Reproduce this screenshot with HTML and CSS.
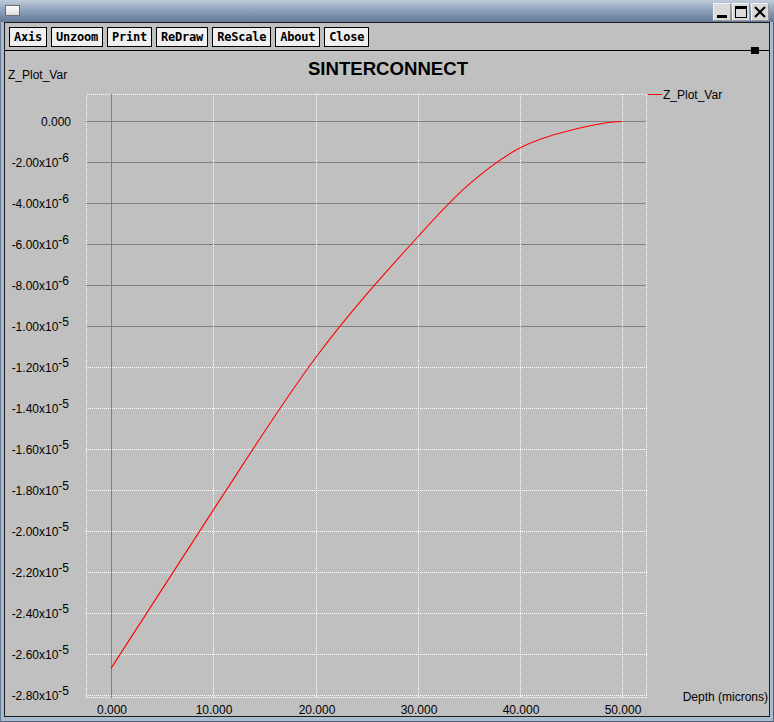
FILE: index.html
```html
<!DOCTYPE html>
<html>
<head>
<meta charset="utf-8">
<link rel="stylesheet" href="styles.css">
</head>
<body>
<div class="window">
  <div class="titlebar">
    <div class="app-icon"></div>
    <div class="win-controls">
      <div class="wbtn">
        <svg width="16" height="16" viewBox="0 0 16 16"><rect x="3" y="11" width="10" height="3" fill="#000"/></svg>
      </div>
      <div class="wbtn">
        <svg width="16" height="16" viewBox="0 0 16 16"><rect x="2.5" y="2.5" width="11" height="11" fill="none" stroke="#000"/><rect x="3" y="3" width="10" height="2" fill="#000"/></svg>
      </div>
      <div class="wbtn">
        <svg width="16" height="16" viewBox="0 0 16 16"><path d="M3 3 L13 13 M13 3 L3 13" stroke="#000" stroke-width="2"/></svg>
      </div>
    </div>
  </div>
  <div class="client">
    <div class="toolbar">
      <div class="btn">Axis</div>
      <div class="btn">Unzoom</div>
      <div class="btn">Print</div>
      <div class="btn">ReDraw</div>
      <div class="btn">ReScale</div>
      <div class="btn">About</div>
      <div class="btn">Close</div>
    </div>
    <div class="separator"><span class="handle"></span></div>
    <svg class="plot" width="764" height="665" viewBox="5 51 764 665">
      <g class="grid-solid" shape-rendering="crispEdges">
        <line x1="86" y1="121.5" x2="646" y2="121.5"/>
        <line x1="86" y1="162.5" x2="646" y2="162.5"/>
        <line x1="86" y1="203.5" x2="646" y2="203.5"/>
        <line x1="86" y1="244.5" x2="646" y2="244.5"/>
        <line x1="86" y1="285.5" x2="646" y2="285.5"/>
        <line x1="86" y1="326.5" x2="646" y2="326.5"/>
      </g>
      <g class="grid-dot" shape-rendering="crispEdges">
        <line x1="86" y1="367.5" x2="647" y2="367.5"/>
        <line x1="86" y1="408.5" x2="647" y2="408.5"/>
        <line x1="86" y1="449.5" x2="647" y2="449.5"/>
        <line x1="86" y1="490.5" x2="647" y2="490.5"/>
        <line x1="86" y1="531.5" x2="647" y2="531.5"/>
        <line x1="86" y1="572.5" x2="647" y2="572.5"/>
        <line x1="86" y1="613.5" x2="647" y2="613.5"/>
        <line x1="86" y1="654.5" x2="647" y2="654.5"/>
        <line x1="86" y1="695.5" x2="647" y2="695.5"/>
        <line x1="213.5" y1="94" x2="213.5" y2="698"/>
        <line x1="316.5" y1="94" x2="316.5" y2="698"/>
        <line x1="418.5" y1="94" x2="418.5" y2="698"/>
        <line x1="520.5" y1="94" x2="520.5" y2="698"/>
        <line x1="622.5" y1="94" x2="622.5" y2="698"/>
        <rect x="86.5" y="94.5" width="560" height="603" fill="none"/>
      </g>
      <line class="axis-v" x1="111.5" y1="94" x2="111.5" y2="698" shape-rendering="crispEdges"/>

      <path class="curve" d="M111,668.4 C145.1,615.1 179.1,562 213.2,510.1 C247.3,458.2 281.3,403.8 315.4,358 C349.5,312.2 383.5,274.6 417.6,237 C434.6,218.2 451.7,199.2 468.7,184.6 C485.7,169.9 502.8,156.9 519.8,148 C536.8,139.1 553.9,134.3 570.9,130.2 C587.9,126.1 605,121.5 622,121.5"/>

      <text class="title" x="388" y="75" text-anchor="middle">SINTERCONNECT</text>
      <text class="lbl" x="8" y="79">Z_Plot_Var</text>

      <line class="legend-line" x1="648" y1="94.5" x2="662" y2="94.5" shape-rendering="crispEdges"/>
      <text class="lbl" x="663" y="99">Z_Plot_Var</text>

      <g class="lbl">
        <text x="71" y="125.5" text-anchor="end">0.000</text>
        <text x="69" y="167" text-anchor="end">-2.00x10<tspan dy="-5">-6</tspan></text>
        <text x="69" y="208" text-anchor="end">-4.00x10<tspan dy="-5">-6</tspan></text>
        <text x="69" y="249" text-anchor="end">-6.00x10<tspan dy="-5">-6</tspan></text>
        <text x="69" y="290" text-anchor="end">-8.00x10<tspan dy="-5">-6</tspan></text>
        <text x="69" y="331" text-anchor="end">-1.00x10<tspan dy="-5">-5</tspan></text>
        <text x="69" y="372" text-anchor="end">-1.20x10<tspan dy="-5">-5</tspan></text>
        <text x="69" y="413" text-anchor="end">-1.40x10<tspan dy="-5">-5</tspan></text>
        <text x="69" y="454" text-anchor="end">-1.60x10<tspan dy="-5">-5</tspan></text>
        <text x="69" y="495" text-anchor="end">-1.80x10<tspan dy="-5">-5</tspan></text>
        <text x="69" y="536" text-anchor="end">-2.00x10<tspan dy="-5">-5</tspan></text>
        <text x="69" y="577" text-anchor="end">-2.20x10<tspan dy="-5">-5</tspan></text>
        <text x="69" y="618" text-anchor="end">-2.40x10<tspan dy="-5">-5</tspan></text>
        <text x="69" y="659" text-anchor="end">-2.60x10<tspan dy="-5">-5</tspan></text>
        <text x="69" y="700" text-anchor="end">-2.80x10<tspan dy="-5">-5</tspan></text>
      </g>
      <g class="lbl" text-anchor="middle">
        <text x="112" y="714">0.000</text>
        <text x="214" y="714">10.000</text>
        <text x="317" y="714">20.000</text>
        <text x="419" y="714">30.000</text>
        <text x="521" y="714">40.000</text>
        <text x="623" y="714">50.000</text>
      </g>
      <text class="lbl" x="768" y="701" text-anchor="end">Depth (microns)</text>
    </svg>
  </div>
</div>
</body>
</html>
```

FILE: styles.css
```css
html, body {
  margin: 0;
  padding: 0;
  background: #c0c0c0;
}

.window {
  width: 774px;
  height: 722px;
  box-sizing: border-box;
  display: flex;
  flex-direction: column;
  background: #a9bbcf;
  border-bottom: 1px solid #4f6078;
  border-left: 1px solid #6a7d96;
  border-right: 1px solid #4f6078;
}

.titlebar {
  height: 22px;
  flex: none;
  box-sizing: border-box;
  display: flex;
  align-items: flex-start;
  padding: 5px 0 0 5px;
  margin: 0 -1px;
  background: linear-gradient(#bfccdb, #8b9fb8 50%, #64799a);
}

.app-icon {
  width: 15px;
  height: 11px;
  box-sizing: border-box;
  border: 1px solid #6e6e6e;
  background: linear-gradient(#ffffff, #dcdcdc);
}

.win-controls {
  margin-left: auto;
  margin-right: 5px;
  margin-top: -2px;
  display: flex;
  gap: 1px;
}

.wbtn {
  width: 18px;
  height: 18px;
  box-sizing: border-box;
  background: #d9d9d9;
  border: 1px solid #9a9a9a;
  border-top-color: #f4f4f4;
  border-left-color: #f4f4f4;
  display: flex;
  align-items: center;
  justify-content: center;
}

.wbtn svg {
  display: block;
}

.client {
  flex: 1;
  margin: 0 3px 4px 3px;
  border: 1px solid #1c1c1c;
  background: #c0c0c0;
  display: flex;
  flex-direction: column;
}

.toolbar {
  height: 27px;
  box-sizing: border-box;
  display: flex;
  align-items: flex-start;
  gap: 4px;
  padding: 4px 0 0 4px;
}

.btn {
  height: 20px;
  box-sizing: border-box;
  padding: 0 4px;
  border: 1px solid #000;
  background: #f0f0f0;
  font: bold 12px/18px "DejaVu Sans Mono", monospace;
  color: #000;
  letter-spacing: -0.22px;
}

.separator {
  height: 1px;
  background: #000;
  position: relative;
  flex: none;
}

.handle {
  position: absolute;
  left: 746px;
  top: -3px;
  width: 8px;
  height: 7px;
  background: #000;
}

.plot {
  display: block;
  flex: none;
}

.grid-solid line {
  stroke: #808080;
  stroke-width: 1;
}

.grid-dot line,
.grid-dot rect {
  stroke: #ffffff;
  stroke-width: 1;
  stroke-dasharray: 1 1;
}

.axis-v {
  stroke: #808080;
  stroke-width: 1;
}

.curve {
  fill: none;
  stroke: #ff0000;
  stroke-width: 1.1;
}

.legend-line {
  stroke: #ff0000;
  stroke-width: 1;
}

.title {
  font-family: "Liberation Sans", Arial, sans-serif;
  font-weight: bold;
  font-size: 18.6px;
  fill: #000;
}

.lbl {
  font-family: "Liberation Sans", Arial, sans-serif;
  font-size: 12px;
  fill: #000;
}
```
